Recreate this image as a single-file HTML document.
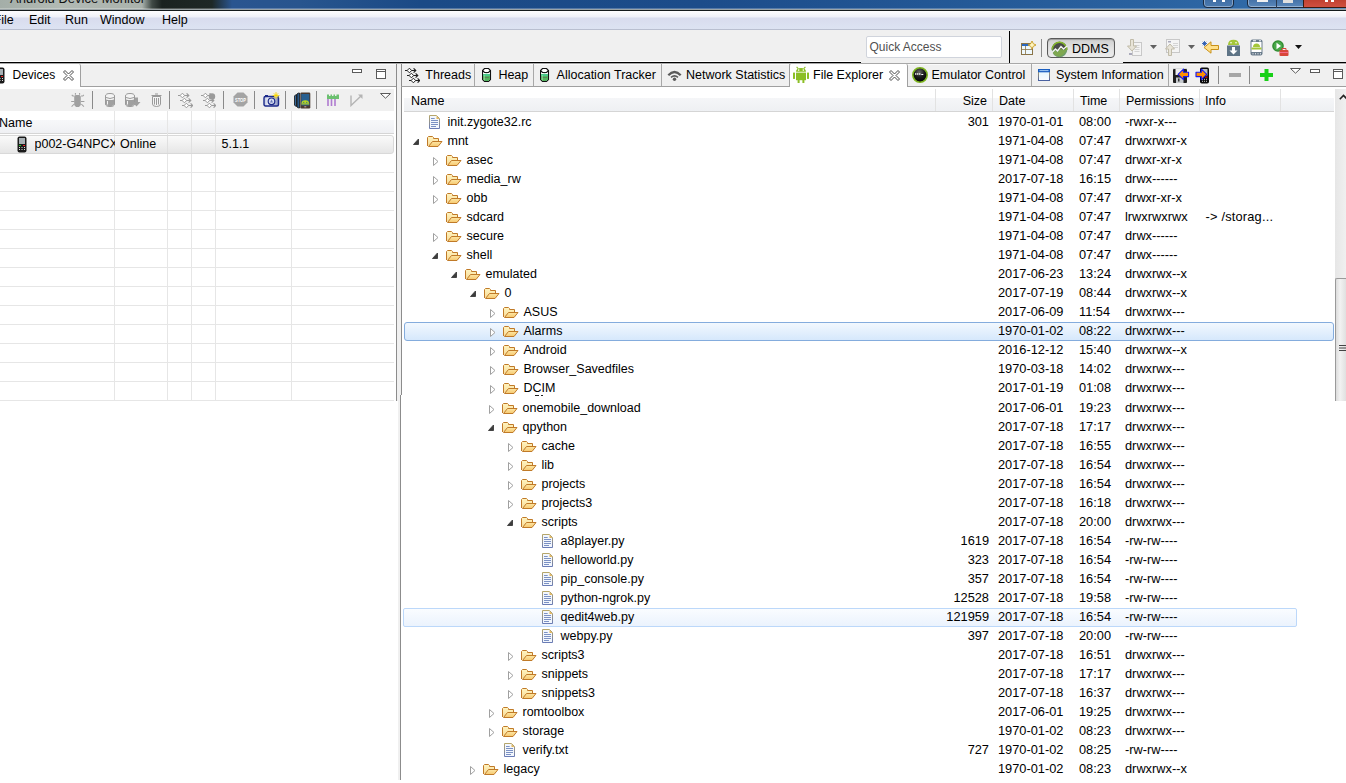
<!DOCTYPE html>
<html><head><meta charset="utf-8"><style>
*{margin:0;padding:0;box-sizing:border-box}
html,body{width:1346px;height:783px;overflow:hidden;background:#fff;font-family:"Liberation Sans",sans-serif;font-size:12.5px;color:#000;position:relative}
.abs{position:absolute}
.ic{display:block}
.t{position:absolute;height:19px;line-height:19px;white-space:nowrap}
.tx{position:absolute;white-space:nowrap;line-height:15px;height:15px}
.r{text-align:right}
.d{font-size:12.8px;margin-top:-1px}
#title{position:absolute;left:0;top:0;width:1346px;height:9px;background:linear-gradient(90deg,#a4aea8 0,#b2bab4 60px,#aab2ac 142px,#404a46 152px,#1a2220 162px,#1e2826 212px,#2a5590 232px,#28558e 300px,#1b4a86 420px,#1c4c8a 700px,#2a62a0 1150px,#3470ad 1346px)}
#titletxt{position:absolute;left:10px;top:-8px;font-size:13px;line-height:13px;color:#111;white-space:nowrap}
.mi{position:absolute;top:11px;height:18px;line-height:18px;font-size:12.5px}
.sel{position:absolute;left:404px;width:930px;height:19px;border:1px solid #84acdd;border-radius:3px;background:linear-gradient(#f2f8fe,#d6e8fc)}
.hov{position:absolute;left:403px;width:894px;height:19px;border:1px solid #bcd8fa;border-radius:2px;background:linear-gradient(#fafcff,#ebf3fd)}
.hd{position:absolute;height:15px;line-height:15px;white-space:nowrap}
</style></head><body>
<svg width="0" height="0" style="position:absolute"><defs><linearGradient id="fb" x1="0" y1="0" x2="0" y2="1"><stop offset="0" stop-color="#fff4c0"/><stop offset="1" stop-color="#f8dc98"/></linearGradient><linearGradient id="ff" x1="0" y1="0" x2="0" y2="1"><stop offset="0" stop-color="#fde7a6"/><stop offset="1" stop-color="#f6c86e"/></linearGradient><linearGradient id="fs" x1="0" y1="0" x2="0" y2="1"><stop offset="0" stop-color="#b6a66a"/><stop offset="1" stop-color="#6a7cb6"/></linearGradient></defs></svg>
<div id="title"><div id="titletxt">Android Device Monitor</div></div>
<div class="abs" style="left:1203px;top:-4px;width:31px;height:12px;background:linear-gradient(#3d6aa0,#4a7ab0);border:1px solid #1a2a40;border-radius:0 0 4px 4px;box-shadow:inset 0 0 0 1px rgba(255,255,255,0.35)"></div>
<div class="abs" style="left:1213px;top:0px;width:3px;height:2px;background:#fff"></div>
<div class="abs" style="left:1222px;top:0px;width:3px;height:2px;background:#fff"></div>
<div class="abs" style="left:1247px;top:-4px;width:99px;height:12px;background:linear-gradient(#3d6aa0,#5a88bb);border:1px solid #1a2a40;border-radius:0 0 0 4px;box-shadow:inset 0 0 0 1px rgba(255,255,255,0.35)"></div>
<div class="abs" style="left:1276px;top:-1px;width:1px;height:9px;background:#2a3a50"></div>
<div class="abs" style="left:1303px;top:-4px;width:43px;height:12px;background:linear-gradient(#b83a2a,#d05040);border-left:1px solid #3a1a10;border-bottom:1px solid #3a1a10"></div>
<div class="abs" style="left:1257px;top:0px;width:11px;height:2px;background:#f0f0f0"></div>
<div class="abs" style="left:1283px;top:0px;width:10px;height:3px;background:#e0e0e0"></div>
<div class="abs" style="left:1325px;top:0px;width:3px;height:2px;background:#fff"></div>
<div class="abs" style="left:1331px;top:0px;width:3px;height:2px;background:#fff"></div>
<div class="abs" style="left:0px;top:8px;width:1346px;height:1px;background:rgba(255,255,255,0.25)"></div><div class="abs" style="left:0px;top:9px;width:1346px;height:1px;background:#9aa3a6"></div>
<div class="abs" style="left:0px;top:10px;width:1346px;height:1px;background:#141a1c"></div>
<div class="abs" style="left:0px;top:11px;width:1346px;height:18px;background:linear-gradient(#fdfdfe 0,#eef0f8 6px,#d8dcee 7px,#dde3f2 100%)"></div>
<div class="abs" style="left:0px;top:29px;width:1346px;height:1px;background:#b9bfd0"></div>
<div class="mi" style="left:-6.5px">File</div>
<div class="mi" style="left:29px">Edit</div>
<div class="mi" style="left:65px">Run</div>
<div class="mi" style="left:100px">Window</div>
<div class="mi" style="left:162px">Help</div>
<div class="abs" style="left:0px;top:30px;width:1346px;height:33px;background:#f0f0f0"></div>
<div class="abs" style="left:0px;top:62px;width:861px;height:1px;background:#000"></div>
<div class="abs" style="left:0px;top:61px;width:861px;height:1px;background:#fff"></div>
<div class="abs" style="left:0px;top:63px;width:1346px;height:1px;background:#a8a8a8"></div>
<div class="abs" style="left:1123px;top:62px;width:223px;height:1px;background:#000"></div>
<div class="abs" style="left:1009px;top:31px;width:1px;height:32px;background:#000"></div>
<div class="abs" style="left:866px;top:36px;width:136px;height:22px;background:#fff;border:1px solid #d0d4dc;border-radius:2px"></div>
<div class="tx" style="left:869.5px;top:39.5px;color:#505050;font-size:12px">Quick Access</div>
<svg class="abs" style="left:1021px;top:41px" width="16" height="15" viewBox="0 0 16 15"><rect x="0.5" y="2.5" width="11" height="11" fill="#eef8fd" stroke="#8a7448"/><rect x="1" y="3" width="10" height="2" fill="#2a68c0"/><path d="M4.5 5V13.5M1 8.5H11" stroke="#8a7448" stroke-width="0.8"/><path d="M11 0L12.3 2.7L15 4L12.3 5.3L11 8L9.7 5.3L7 4L9.7 2.7Z" fill="#fff6c0" stroke="#c89a20" stroke-width="0.9"/></svg>
<div class="abs" style="left:1041px;top:39px;width:1px;height:18px;background:#8a8a8a"></div>
<div class="abs" style="left:1047px;top:38px;width:68px;height:20px;background:linear-gradient(#cfcfcf,#e2e2e2 50%,#ececec);border:1px solid #5a5a5a;border-radius:4px;box-shadow:inset 0 1px 1px rgba(0,0,0,0.25)"></div>
<svg class="abs" style="left:1050.5px;top:40.5px" width="17" height="17" viewBox="0 0 17 17"><circle cx="8.5" cy="8.5" r="7.8" fill="#6e9c6a"/><path d="M0.7 8.5A7.8 7.8 0 0 1 16.3 8.5Z" fill="#4a4a4a"/><circle cx="8.5" cy="8.5" r="7.2" fill="none" stroke="#86b82a" stroke-width="1.4" stroke-dasharray="23 100" transform="rotate(180 8.5 8.5)"/><path d="M1 11.5L4.5 8L6.5 10L10 5.5L12.5 8L16 5" fill="none" stroke="#f4f4f4" stroke-width="1.3"/><path d="M2 12L4.5 9.5L6.5 11.5L10 7L12.5 9.5L15.5 7V9Q13 14 8.5 15.5Q4 15 2 12Z" fill="#8ab040" opacity="0.6"/></svg>
<div class="tx" style="left:1072px;top:41.5px;">DDMS</div>
<svg class="abs" style="left:1127px;top:39px" width="15" height="17" viewBox="0 0 15 17"><rect x="5.5" y="3.5" width="9" height="13" fill="#f4f4f4" stroke="#c8c8c8"/><path d="M7.5 6.5h5M7.5 8.5h5M7.5 10.5h5M7.5 12.5h5" stroke="#d4d4d4"/><rect x="2" y="14" width="3" height="2" fill="#aab"/><path d="M3.5 0.5H6.5V7H9.5L5 12L0.5 7H3.5Z" fill="#e8e4d8" stroke="#c0bba8"/></svg>
<svg class="abs" style="left:1150px;top:45px" width="7" height="4" viewBox="0 0 7 4"><path d="M0 0H7L3.5 4Z" fill="#606060"/></svg>
<svg class="abs" style="left:1165px;top:39px" width="15" height="17" viewBox="0 0 15 17"><rect x="1.5" y="0.5" width="13" height="13" fill="#f4f4f4" stroke="#c8c8c8"/><rect x="3" y="2" width="3" height="1.5" fill="#aab"/><path d="M8 4.5h5M8 6.5h5M8 8.5h5" stroke="#d4d4d4"/><path d="M3.5 16.5H6.5V10H9.5L5 5L0.5 10H3.5Z" fill="#e8e4d8" stroke="#c0bba8"/></svg>
<svg class="abs" style="left:1188px;top:45px" width="7" height="4" viewBox="0 0 7 4"><path d="M0 0H7L3.5 4Z" fill="#606060"/></svg>
<svg class="abs" style="left:1202px;top:41px" width="17" height="13" viewBox="0 0 17 13"><path d="M16.5 4.5H9V0.8L2 6.5L9 12.2V8.5H16.5Z" fill="#ffe08a" stroke="#c8901a"/><path d="M2.5 0V5M0 2.5H5M0.8 0.8L4.2 4.2M4.2 0.8L0.8 4.2" stroke="#2a5ab0" stroke-width="0.9"/></svg>
<svg class="abs" style="left:1227px;top:39px" width="13" height="17" viewBox="0 0 13 17"><path d="M1 6Q1 0.8 6.5 0.8Q12 0.8 12 6Z" fill="#a4c639"/><circle cx="4" cy="3.8" r="0.8" fill="#fff"/><circle cx="9" cy="3.8" r="0.8" fill="#fff"/><rect x="0" y="6.5" width="13" height="10.5" fill="#5e7486"/><path d="M5 8H8V11.5H10.5L6.5 15.5L2.5 11.5H5Z" fill="#fff"/></svg>
<svg class="abs" style="left:1250px;top:39px" width="13" height="17" viewBox="0 0 13 17"><rect x="0.5" y="0.5" width="12" height="16" rx="2" fill="#6a7c8c"/><rect x="1.5" y="3" width="10" height="10" fill="#fff"/><path d="M3 8Q3 4.5 6.5 4.5Q10 4.5 10 8Z" fill="#a4c639"/><rect x="1.5" y="8.5" width="10" height="2" fill="#a4c639"/><path d="M3 1.8h3M9 1.8h2" stroke="#fff"/><path d="M2.5 14.8h1M5 14.8h1M7.5 14.8h1M10 14.8h1" stroke="#fff"/></svg>
<svg class="abs" style="left:1272px;top:40px" width="17" height="16" viewBox="0 0 17 16"><circle cx="6" cy="6" r="5.8" fill="#2e8a2e"/><circle cx="6" cy="6" r="4.5" fill="#4aa84a"/><path d="M4.5 2.8V9.2L9 6Z" fill="#fff"/><rect x="7.5" y="10" width="9" height="6" rx="1" fill="#d8463a"/><path d="M10 10V8.5H14V10" fill="none" stroke="#d8463a"/><path d="M8 12.5H16" stroke="#f7a" stroke-width="0.7"/></svg>
<svg class="abs" style="left:1295px;top:45px" width="7" height="4" viewBox="0 0 7 4"><path d="M0 0H7L3.5 4Z" fill="#111"/></svg>
<div class="abs" style="left:0px;top:64px;width:397px;height:337px;background:#fff"></div>
<div class="abs" style="left:0px;top:64px;width:396px;height:22px;background:#f0f0f0"></div>
<div class="abs" style="left:0px;top:64px;width:81px;height:23px;background:#fff;border-right:1px solid #a0a0a0;border-top-right-radius:2px"></div>
<div class="abs" style="left:81px;top:64px;width:315px;height:1px;background:#fafafa"></div>
<svg class="abs" style="left:-5px;top:67px" width="10" height="17" viewBox="0 0 10 17"><rect x="0.5" y="0.5" width="9" height="16" rx="2" fill="#1a1a1a"/><rect x="2" y="2" width="6" height="6" fill="#a8b0b4"/><rect x="2" y="9" width="2" height="1" fill="#2c2"/><rect x="6" y="9" width="2" height="1" fill="#e22"/><path d="M2 11.5h1M4.5 11.5h1M7 11.5h1M2 13.5h1M4.5 13.5h1M7 13.5h1" stroke="#ddd"/></svg>
<div class="tx" style="left:12.5px;top:68px;font-size:12px">Devices</div>
<svg class="abs" style="left:62.5px;top:69.5px" width="11" height="11" viewBox="0 0 11 11"><path d="M0.5 2L2 0.5L5.5 4L9 0.5L10.5 2L7 5.5L10.5 9L9 10.5L5.5 7L2 10.5L0.5 9L4 5.5Z" fill="#fff" stroke="#4a4a4a" stroke-width="1" stroke-linejoin="round"/></svg>
<div class="abs" style="left:80px;top:86px;width:316px;height:1px;background:#a0a0a0"></div>
<svg class="abs" style="left:352px;top:69px" width="10" height="4" viewBox="0 0 10 4"><rect x="0.5" y="0.5" width="9" height="3" fill="#fff" stroke="#5a5a5a"/></svg>
<svg class="abs" style="left:376px;top:69px" width="10" height="10" viewBox="0 0 10 10"><rect x="0.5" y="0.5" width="9" height="9" fill="#fff" stroke="#5a5a5a"/><path d="M1 2.5H9" stroke="#5a5a5a"/></svg>
<div class="abs" style="left:396px;top:64px;width:1px;height:337px;background:#8c8c8c"></div>
<div class="abs" style="left:0px;top:89px;width:394px;height:22px;background:#f0f0f0"></div>
<svg class="abs" style="left:71px;top:93px" width="14" height="15" viewBox="0 0 14 15"><path d="M4.5 2H8.5L9.8 3.5V12L8 14H5L3.2 12V3.5Z" fill="#a0a0a0"/><path d="M4.4 0V1.8M8.6 0V1.8M0.8 1.8L1.8 3H3.5M12.8 1.8L11.8 3H10M0.2 8.5H3.5M10 8.5H13.4M0.6 13.6L3.2 11M12.9 13.6L10.3 11" fill="none" stroke="#a0a0a0" stroke-width="1.05"/></svg>
<div class="abs" style="left:92px;top:91px;width:1px;height:18px;background:#8a8a8a"></div>
<svg class="abs" style="left:105px;top:93px" width="10" height="14" viewBox="0 0 10 14"><path d="M0.5 3Q0.5 0.5 5 0.5Q9.5 0.5 9.5 3V11Q9.5 13.5 5 13.5Q0.5 13.5 0.5 11Z" fill="#f4f4f4" stroke="#9a9a9a"/><path d="M1 6.5Q5 7.5 9 6.5V11Q9 13 5 13Q1 13 1 11Z" fill="#a0a0a0"/><path d="M1 4.5Q5 6.5 9 4.5" fill="none" stroke="#9a9a9a"/><path d="M2.5 8V11.5" stroke="#f4f4f4"/></svg>
<svg class="abs" style="left:125px;top:93px" width="16" height="14" viewBox="0 0 16 14"><path d="M0.5 3Q0.5 0.5 5 0.5Q9.5 0.5 9.5 3V11Q9.5 13.5 5 13.5Q0.5 13.5 0.5 11Z" fill="#f4f4f4" stroke="#9a9a9a"/><path d="M1 6.5Q5 7.5 9 6.5V11Q9 13 5 13Q1 13 1 11Z" fill="#a0a0a0"/><path d="M1 4.5Q5 6.5 9 4.5" fill="none" stroke="#9a9a9a"/><path d="M2.5 8V11.5" stroke="#f4f4f4"/><path d="M10 4.5H13V9H15.5L11.5 13.5L7.5 9H10Z" fill="#a0a0a0"/></svg>
<svg class="abs" style="left:151px;top:93px" width="11" height="14" viewBox="0 0 11 14"><path d="M1.5 3.5H9.5V11Q9.5 13.5 5.5 13.5Q1.5 13.5 1.5 11Z" fill="#f4f4f4" stroke="#9a9a9a"/><path d="M0.5 2.5H10.5M4 1H7" stroke="#9a9a9a" stroke-width="1.2"/><path d="M3.5 5V11.5M5.5 5V12M7.5 5V11.5" stroke="#9a9a9a"/></svg>
<div class="abs" style="left:169px;top:91px;width:1px;height:18px;background:#8a8a8a"></div>
<svg class="abs" style="left:178px;top:93px" width="15" height="15" viewBox="0 0 15 15"><path d="M0 2.5H11M8.6 0.2999999999999998L10.8 2.5L8.6 4.7" fill="none" stroke="#9a9a9a" stroke-width="1.1"/><path d="M4.4 0.20000000000000018L6.7 2.5L4.4 4.8L2.1 2.5Z" fill="#fff" stroke="#9a9a9a" stroke-width="1"/><path d="M2 7.5H13M10.6 5.3L12.8 7.5L10.6 9.7" fill="none" stroke="#9a9a9a" stroke-width="1.1"/><path d="M6.4 5.2L8.7 7.5L6.4 9.8L4.1 7.5Z" fill="#fff" stroke="#9a9a9a" stroke-width="1"/><path d="M4 12.5H15M12.6 10.3L14.8 12.5L12.6 14.7" fill="none" stroke="#9a9a9a" stroke-width="1.1"/><path d="M8.4 10.2L10.7 12.5L8.4 14.8L6.1 12.5Z" fill="#fff" stroke="#9a9a9a" stroke-width="1"/></svg>
<svg class="abs" style="left:201px;top:93px" width="15" height="15" viewBox="0 0 15 15"><path d="M0 2.5H11M8.6 0.2999999999999998L10.8 2.5L8.6 4.7" fill="none" stroke="#9a9a9a" stroke-width="1.1"/><path d="M4.4 0.20000000000000018L6.7 2.5L4.4 4.8L2.1 2.5Z" fill="#fff" stroke="#9a9a9a" stroke-width="1"/><path d="M2 7.5H13M10.6 5.3L12.8 7.5L10.6 9.7" fill="none" stroke="#9a9a9a" stroke-width="1.1"/><path d="M6.4 5.2L8.7 7.5L6.4 9.8L4.1 7.5Z" fill="#fff" stroke="#9a9a9a" stroke-width="1"/><path d="M4 12.5H15M12.6 10.3L14.8 12.5L12.6 14.7" fill="none" stroke="#9a9a9a" stroke-width="1.1"/><path d="M8.4 10.2L10.7 12.5L8.4 14.8L6.1 12.5Z" fill="#fff" stroke="#9a9a9a" stroke-width="1"/><circle cx="11" cy="3.5" r="3.2" fill="#9a9a9a"/></svg>
<div class="abs" style="left:223px;top:91px;width:1px;height:18px;background:#8a8a8a"></div>
<svg class="abs" style="left:233px;top:92px" width="15" height="15" viewBox="0 0 15 15"><path d="M4.5 0.5H10.5L14.5 4.5V10.5L10.5 14.5H4.5L0.5 10.5V4.5Z" fill="#a4a4a4"/><text x="2" y="9.5" font-size="5.4" font-family="Liberation Sans" font-weight="bold" fill="#fff" textLength="11" lengthAdjust="spacingAndGlyphs">STOP</text></svg>
<div class="abs" style="left:254px;top:91px;width:1px;height:18px;background:#8a8a8a"></div>
<svg class="abs" style="left:263px;top:92px" width="17" height="15" viewBox="0 0 17 15"><defs><linearGradient id="cg" x1="0" y1="0" x2="1" y2="0"><stop offset="0" stop-color="#b8c0dc"/><stop offset="0.3" stop-color="#f0f2fa"/><stop offset="1" stop-color="#8a94c0"/></linearGradient></defs><rect x="1" y="4.5" width="14.5" height="9.5" rx="1.5" fill="url(#cg)" stroke="#1c2a8a" stroke-width="1.4"/><rect x="2" y="3" width="3" height="2" fill="#1c2a8a"/><circle cx="8.5" cy="9.3" r="3.3" fill="#d8def0" stroke="#1c2a8a" stroke-width="1.2"/><path d="M7 10.5L8.5 7.5L10 10.5Z" fill="#6a7ab8"/><circle cx="13" cy="3.5" r="2" fill="#fff7a0"/><path d="M13 0V7M9.5 3.5H16.5M10.8 1.3L15.2 5.7M15.2 1.3L10.8 5.7" stroke="#f4d000" stroke-width="0.8"/></svg>
<div class="abs" style="left:285px;top:91px;width:1px;height:18px;background:#8a8a8a"></div>
<svg class="abs" style="left:294px;top:92px" width="17" height="17" viewBox="0 0 17 17"><path d="M0.5 4Q1.5 2.5 2.5 2.5V14.5Q1.5 14.5 0.5 13Z" fill="#3a6a9a" stroke="#111" stroke-width="0.8"/><path d="M3 2Q4 0.8 5.5 1V16Q4 16 3 15Z" fill="#2a5a8a" stroke="#111" stroke-width="0.8"/><rect x="6.3" y="0.5" width="10" height="16" rx="1.2" fill="#4a3a30"/><rect x="7.3" y="2" width="8" height="11.5" fill="#2a6090"/><path d="M7.5 11.5Q7.5 8.3 11.3 8.3Q15 8.3 15 11.5Z" fill="#b8d820"/><rect x="7.3" y="11.5" width="8" height="1" fill="#b8d820"/><circle cx="9.8" cy="10.3" r="0.6" fill="#2a6090"/><circle cx="12.8" cy="10.3" r="0.6" fill="#2a6090"/><rect x="10.3" y="14.3" width="2" height="1" fill="#caa"/></svg>
<div class="abs" style="left:316px;top:91px;width:1px;height:18px;background:#8a8a8a"></div>
<svg class="abs" style="left:327px;top:94px" width="13" height="13" viewBox="0 0 13 13"><path d="M1 5V12M4.5 5V12M8 5V12" stroke="#b07cd0" stroke-width="1.6"/><path d="M0 0.5H2V2H3.5V0.5H5V2H6.5V0.5H8V2H9.5V0.5H12V5H0Z" fill="#6cc070"/></svg>
<svg class="abs" style="left:350px;top:94px" width="13" height="13" viewBox="0 0 13 13"><path d="M1 1.5V11.5L11 2" fill="none" stroke="#b4b4b4" stroke-width="1.4"/><path d="M8 0.5H12.5V5Z" fill="#b4b4b4"/></svg>
<svg class="abs" style="left:380px;top:93px" width="11" height="6" viewBox="0 0 11 6"><path d="M0.5 0.5H10.5L5.5 5.2Z" fill="#fff" stroke="#5a5a5a" stroke-linejoin="round"/></svg>
<div class="abs" style="left:0px;top:120px;width:394px;height:13px;background:linear-gradient(#f7f8fa,#eff0f3)"></div>
<div class="abs" style="left:0px;top:133px;width:394px;height:1px;background:#d5d5d5"></div>
<div class="abs" style="left:114px;top:111px;width:1px;height:290px;background:#e6e6e6"></div>
<div class="abs" style="left:167px;top:111px;width:1px;height:290px;background:#e6e6e6"></div>
<div class="abs" style="left:191px;top:111px;width:1px;height:290px;background:#e6e6e6"></div>
<div class="abs" style="left:215px;top:111px;width:1px;height:290px;background:#e6e6e6"></div>
<div class="abs" style="left:291px;top:111px;width:1px;height:290px;background:#e6e6e6"></div>
<div class="tx" style="left:-1px;top:116px;">Name</div>
<div class="abs" style="left:-4px;top:135px;width:398px;height:19px;background:linear-gradient(#fafafa,#e6e6e6);border:1px solid #d9d9d9;border-radius:3px"></div>
<div class="abs" style="left:114px;top:136px;width:1px;height:17px;background:#e0e0e0"></div>
<div class="abs" style="left:167px;top:136px;width:1px;height:17px;background:#e0e0e0"></div>
<div class="abs" style="left:191px;top:136px;width:1px;height:17px;background:#e0e0e0"></div>
<div class="abs" style="left:215px;top:136px;width:1px;height:17px;background:#e0e0e0"></div>
<div class="abs" style="left:291px;top:136px;width:1px;height:17px;background:#e0e0e0"></div>
<svg class="abs" style="left:17px;top:136px" width="10" height="17" viewBox="0 0 10 17"><rect x="0.5" y="0.5" width="9" height="16" rx="2" fill="#1a1a1a"/><rect x="2" y="2" width="6" height="6" fill="#a8b0b4"/><rect x="2" y="9" width="2" height="1" fill="#2c2"/><rect x="6" y="9" width="2" height="1" fill="#e22"/><path d="M2 11.5h1M4.5 11.5h1M7 11.5h1M2 13.5h1M4.5 13.5h1M7 13.5h1" stroke="#ddd"/></svg>
<div class="tx" style="left:34.5px;top:137px;width:80px;overflow:hidden">p002-G4NPCX</div>
<div class="tx" style="left:120px;top:137px;">Online</div>
<div class="tx" style="left:221.5px;top:137px;">5.1.1</div>
<div class="abs" style="left:0px;top:172px;width:394px;height:1px;background:#e6e6e6"></div>
<div class="abs" style="left:0px;top:191px;width:394px;height:1px;background:#e6e6e6"></div>
<div class="abs" style="left:0px;top:210px;width:394px;height:1px;background:#e6e6e6"></div>
<div class="abs" style="left:0px;top:229px;width:394px;height:1px;background:#e6e6e6"></div>
<div class="abs" style="left:0px;top:248px;width:394px;height:1px;background:#e6e6e6"></div>
<div class="abs" style="left:0px;top:267px;width:394px;height:1px;background:#e6e6e6"></div>
<div class="abs" style="left:0px;top:286px;width:394px;height:1px;background:#e6e6e6"></div>
<div class="abs" style="left:0px;top:305px;width:394px;height:1px;background:#e6e6e6"></div>
<div class="abs" style="left:0px;top:324px;width:394px;height:1px;background:#e6e6e6"></div>
<div class="abs" style="left:0px;top:343px;width:394px;height:1px;background:#e6e6e6"></div>
<div class="abs" style="left:0px;top:362px;width:394px;height:1px;background:#e6e6e6"></div>
<div class="abs" style="left:0px;top:381px;width:394px;height:1px;background:#e6e6e6"></div>
<div class="abs" style="left:0px;top:400px;width:394px;height:1px;background:#e6e6e6"></div>
<div class="abs" style="left:397px;top:64px;width:4px;height:337px;background:#f0f0f0"></div>
<div class="abs" style="left:401px;top:64px;width:945px;height:22px;background:#f0f0f0"></div>
<div class="abs" style="left:402px;top:64px;width:387px;height:1px;background:#fafafa"></div>
<div class="abs" style="left:908px;top:64px;width:438px;height:1px;background:#fafafa"></div>
<div class="abs" style="left:401px;top:64px;width:1px;height:331px;background:#8c8c8c"></div>
<div class="abs" style="left:400px;top:395px;width:1px;height:385px;background:#8c8c8c"></div>
<div class="abs" style="left:398px;top:401px;width:2px;height:379px;background:#f0f0f0"></div>
<div class="abs" style="left:535px;top:395px;width:4px;height:1px;background:#222"></div>
<div class="abs" style="left:541px;top:395px;width:2px;height:1px;background:#222"></div>
<div class="abs" style="left:401px;top:86px;width:945px;height:1px;background:#a0a0a0"></div>
<div class="abs" style="left:474px;top:64px;width:1px;height:22px;background:#a8a8a8"></div>
<div class="tx" style="left:425.3px;top:68px;">Threads</div>
<div class="abs" style="left:533px;top:64px;width:1px;height:22px;background:#a8a8a8"></div>
<div class="tx" style="left:498.4px;top:68px;">Heap</div>
<div class="abs" style="left:661px;top:64px;width:1px;height:22px;background:#a8a8a8"></div>
<div class="tx" style="left:556.6px;top:68px;">Allocation Tracker</div>
<div class="abs" style="left:789px;top:64px;width:1px;height:22px;background:#a8a8a8"></div>
<div class="tx" style="left:686px;top:68px;">Network Statistics</div>
<div class="abs" style="left:789px;top:64px;width:119px;height:23px;background:#fff;border-left:1px solid #a0a0a0;border-right:1px solid #a0a0a0;border-top-left-radius:2px;border-top-right-radius:2px"></div>
<div class="tx" style="left:813px;top:68px;">File Explorer</div>
<div class="abs" style="left:1031px;top:64px;width:1px;height:22px;background:#a8a8a8"></div>
<div class="tx" style="left:931.5px;top:68px;">Emulator Control</div>
<div class="abs" style="left:1168px;top:64px;width:1px;height:22px;background:#a8a8a8"></div>
<div class="tx" style="left:1056px;top:68px;">System Information</div>
<svg class="abs" style="left:405px;top:68px" width="15" height="15" viewBox="0 0 15 15"><path d="M0 2.5H11M8.6 0.2999999999999998L10.8 2.5L8.6 4.7" fill="none" stroke="#222" stroke-width="1.1"/><path d="M4.4 0.20000000000000018L6.7 2.5L4.4 4.8L2.1 2.5Z" fill="#fff" stroke="#222" stroke-width="1"/><path d="M2 7.5H13M10.6 5.3L12.8 7.5L10.6 9.7" fill="none" stroke="#222" stroke-width="1.1"/><path d="M6.4 5.2L8.7 7.5L6.4 9.8L4.1 7.5Z" fill="#fff" stroke="#222" stroke-width="1"/><path d="M4 12.5H15M12.6 10.3L14.8 12.5L12.6 14.7" fill="none" stroke="#222" stroke-width="1.1"/><path d="M8.4 10.2L10.7 12.5L8.4 14.8L6.1 12.5Z" fill="#fff" stroke="#222" stroke-width="1"/></svg>
<svg class="abs" style="left:482px;top:68px" width="10" height="15" viewBox="0 0 10 15"><path d="M2.5 0.5H6.5L8.5 2.5V11.5L6.5 13.5H2.5L0.5 11.5V2.5Z" fill="#fff" stroke="#111" stroke-width="1.1"/><path d="M1 6.3Q4.5 5.3 8 6.3V11.3L6.3 13H2.7L1 11.3Z" fill="#52b45e"/><path d="M1 6.3Q4.5 5.3 8 6.3V8H1Z" fill="#48c88a"/><path d="M2 9.5H7" stroke="#5a7a5a" stroke-width="0.8"/><path d="M0.5 2.5L2.5 4.5H6.5L8.5 2.5" fill="none" stroke="#111" stroke-width="1.1"/><path d="M2.3 7V12" stroke="#a8e0b0" stroke-width="0.7"/></svg>
<svg class="abs" style="left:540px;top:68px" width="10" height="15" viewBox="0 0 10 15"><path d="M2.5 0.5H6.5L8.5 2.5V11.5L6.5 13.5H2.5L0.5 11.5V2.5Z" fill="#fff" stroke="#111" stroke-width="1.1"/><path d="M1 6.3Q4.5 5.3 8 6.3V11.3L6.3 13H2.7L1 11.3Z" fill="#52b45e"/><path d="M1 6.3Q4.5 5.3 8 6.3V8H1Z" fill="#48c88a"/><path d="M2 9.5H7" stroke="#5a7a5a" stroke-width="0.8"/><path d="M0.5 2.5L2.5 4.5H6.5L8.5 2.5" fill="none" stroke="#111" stroke-width="1.1"/><path d="M2.3 7V12" stroke="#a8e0b0" stroke-width="0.7"/></svg>
<svg class="abs" style="left:667px;top:70px" width="15" height="11" viewBox="0 0 15 11"><path d="M1.3 5.2Q7.5 -1.2 13.7 5.2" fill="none" stroke="#5a5a5a" stroke-width="2.3"/><path d="M4 7.4Q7.5 4.4 11 7.4" fill="none" stroke="#5a5a5a" stroke-width="1.5"/><circle cx="7.5" cy="9.2" r="1.7" fill="#5a5a5a"/></svg>
<svg class="abs" style="left:793px;top:66px" width="16" height="17" viewBox="0 0 16 17"><path d="M3 5.8Q3 2 8 2Q13 2 13 5.8Z" fill="#8cbf26"/><path d="M3.6 0.8L5.2 2.6M12.4 0.8L10.8 2.6" stroke="#8cbf26" stroke-width="1.1"/><circle cx="5.7" cy="4.1" r="0.8" fill="#fff"/><circle cx="10.3" cy="4.1" r="0.8" fill="#fff"/><rect x="3" y="6.6" width="10" height="7.6" fill="#8cbf26"/><rect x="0" y="6.6" width="2" height="6.3" fill="#8cbf26"/><rect x="14" y="6.6" width="2" height="6.3" fill="#8cbf26"/><rect x="4.6" y="13" width="2" height="4" fill="#8cbf26"/><rect x="9.4" y="13" width="2" height="4" fill="#8cbf26"/></svg>
<svg class="abs" style="left:888.5px;top:69.5px" width="11" height="11" viewBox="0 0 11 11"><path d="M0.5 2L2 0.5L5.5 4L9 0.5L10.5 2L7 5.5L10.5 9L9 10.5L5.5 7L2 10.5L0.5 9L4 5.5Z" fill="#fff" stroke="#4a4a4a" stroke-width="1" stroke-linejoin="round"/></svg>
<svg class="abs" style="left:912px;top:67px" width="16" height="16" viewBox="0 0 16 16"><defs><radialGradient id="eg" cx="0.45" cy="0.3" r="0.7"><stop offset="0" stop-color="#6a6a6a"/><stop offset="0.5" stop-color="#1a1a1a"/><stop offset="1" stop-color="#000"/></radialGradient></defs><circle cx="8" cy="8" r="7.2" fill="url(#eg)" stroke="#7cb41e" stroke-width="1.6"/><path d="M3.8 6V8M5.8 6V8M7.8 6V8M9.3 7.5H11.3" stroke="#fff" stroke-width="1"/></svg>
<svg class="abs" style="left:1038px;top:69px" width="12" height="12" viewBox="0 0 12 12"><defs><linearGradient id="ss" x1="0" y1="0" x2="0" y2="1"><stop offset="0" stop-color="#c0a860"/><stop offset="1" stop-color="#4a62a0"/></linearGradient><linearGradient id="sgi" x1="0" y1="0" x2="0" y2="1"><stop offset="0" stop-color="#dff6ff"/><stop offset="1" stop-color="#fafdff"/></linearGradient></defs><rect x="0.5" y="0.5" width="11" height="11" fill="url(#sgi)" stroke="url(#ss)"/><rect x="0" y="0" width="12" height="3.3" fill="#1a5ec0"/><path d="M1.5 1.6H10.5" stroke="#b0d8fa" stroke-width="0.9"/></svg>
<svg class="abs" style="left:1172px;top:67px" width="18" height="17" viewBox="0 0 18 17"><rect x="1" y="1" width="14" height="15" fill="#d8dadc"/><rect x="1" y="2" width="14" height="14" rx="1" fill="#202020"/><rect x="3.5" y="2" width="8" height="6" fill="#f0f0f0"/><rect x="4" y="10.5" width="7.5" height="5.5" fill="#c4c8cc"/><rect x="6" y="11.5" width="1.5" height="3" fill="#333"/><path d="M6.1 7.4L11.5 2.2V5.2H16.6V9.6H11.5V12.6Z" fill="#ff9000" stroke="#1818f0" stroke-width="1.1" stroke-linejoin="round"/></svg>
<svg class="abs" style="left:1195px;top:67px" width="15" height="17" viewBox="0 0 15 17"><rect x="5" y="0.5" width="9" height="16" rx="1.8" fill="#0a0a0a"/><rect x="6.5" y="2" width="6" height="6.5" fill="#b8c0c4"/><rect x="10" y="9.5" width="2.5" height="1.2" fill="#e01010"/><path d="M7 12.3h1M9 12.3h1M11 12.3h1M7 14.3h1M9 14.3h1M11 14.3h1" stroke="#ccc"/><path d="M1 5.2H6.4V2.2L11.7 7.4L6.4 12.6V9.6H1Z" fill="#ff9000" stroke="#1818f0" stroke-width="1.1" stroke-linejoin="round"/></svg>
<div class="abs" style="left:1218px;top:66px;width:1px;height:18px;background:#8a8a8a"></div>
<svg class="abs" style="left:1229px;top:73px" width="12" height="4" viewBox="0 0 12 4"><rect x="0" y="0" width="12" height="4" fill="#a6a6a6"/></svg>
<div class="abs" style="left:1249px;top:66px;width:1px;height:18px;background:#8a8a8a"></div>
<svg class="abs" style="left:1260px;top:69px" width="13" height="12" viewBox="0 0 13 12"><path d="M4.5 0H8.5V4H13V8H8.5V12H4.5V8H0V4H4.5Z" fill="#18d018"/></svg>
<svg class="abs" style="left:1290px;top:68px" width="11" height="6" viewBox="0 0 11 6"><path d="M0.5 0.5H10.5L5.5 5.2Z" fill="#fff" stroke="#5a5a5a" stroke-linejoin="round"/></svg>
<svg class="abs" style="left:1310px;top:69px" width="10" height="4" viewBox="0 0 10 4"><rect x="0.5" y="0.5" width="9" height="3" fill="#fff" stroke="#5a5a5a"/></svg>
<svg class="abs" style="left:1333px;top:69px" width="10" height="10" viewBox="0 0 10 10"><rect x="0.5" y="0.5" width="9" height="9" fill="#fff" stroke="#5a5a5a"/><path d="M1 2.5H9" stroke="#5a5a5a"/></svg>
<div class="abs" style="left:404px;top:98px;width:930px;height:13px;background:linear-gradient(#f5f6f8,#eef0f3)"></div>
<div class="abs" style="left:404px;top:111px;width:930px;height:1px;background:#d5d5d5"></div>
<div class="abs" style="left:935px;top:89px;width:1px;height:22px;background:#e2e2e2"></div>
<div class="abs" style="left:992px;top:89px;width:1px;height:22px;background:#e2e2e2"></div>
<div class="abs" style="left:1073px;top:89px;width:1px;height:22px;background:#e2e2e2"></div>
<div class="abs" style="left:1119px;top:89px;width:1px;height:22px;background:#e2e2e2"></div>
<div class="abs" style="left:1199px;top:89px;width:1px;height:22px;background:#e2e2e2"></div>
<div class="abs" style="left:1280px;top:89px;width:1px;height:22px;background:#e2e2e2"></div>
<div class="tx" style="left:411px;top:93.5px;">Name</div>
<div class="tx" style="right:359px;top:93.5px">Size</div>
<div class="tx" style="left:999px;top:93.5px;">Date</div>
<div class="tx" style="left:1080px;top:93.5px;">Time</div>
<div class="tx" style="left:1126px;top:93.5px;">Permissions</div>
<div class="tx" style="left:1205px;top:93.5px;">Info</div>
<div class="abs" style="left:1334px;top:87px;width:12px;height:2px;background:#fff"></div>
<div class="abs" style="left:1335px;top:89px;width:11px;height:312px;background:linear-gradient(90deg,#e6e6e6,#f0f0f0)"></div>
<svg class="abs" style="left:1339px;top:94px" width="9" height="6" viewBox="0 0 9 6"><path d="M0.8 5.2L4.5 1.5L8.2 5.2" fill="none" stroke="#222" stroke-width="1.6"/></svg>
<div class="abs" style="left:1335px;top:278px;width:11px;height:123px;background:linear-gradient(90deg,#dcdcdc,#f2f2f2 40%,#e0e0e0);border-left:1px solid #9a9a9a;border-top:1px solid #9a9a9a;border-top-left-radius:2px"></div>
<svg class="abs" style="left:1339px;top:344px" width="7" height="9" viewBox="0 0 7 9"><path d="M0 1.5h7M0 4h7M0 6.5h7" stroke="#444"/></svg>
<div class="abs" style="left:429px;top:115px"><svg class="ic" width="12" height="15" viewBox="0 0 12 15"><path d="M0.5 0.5H7.5L10.5 3.5V13.5H0.5Z" fill="#f3f7fd" stroke="url(#fs)"/><path d="M7.5 1V4H10.5Z" fill="#e2b65a"/><path d="M2 3.5h3.7M2 5.5h7M2 7.5h7M2 9.5h7M2 11.5h5" stroke="#7b91c4"/></svg></div><div class="t" style="left:447.5px;top:113px">init.zygote32.rc</div><div class="t r d" style="right:357px;top:113px">301</div><div class="t d" style="left:998px;top:113px">1970-01-01</div><div class="t d" style="left:1079px;top:113px">08:00</div><div class="t d" style="left:1125px;top:113px">-rwxr-x---</div>
<div class="abs" style="left:413px;top:138px"><svg class="ic" width="7" height="8" viewBox="0 0 7 8"><path d="M5.5 1V6.5H0.5Z" fill="#3c3c3c" stroke="#444" stroke-linejoin="round"/></svg></div><div class="abs" style="left:427px;top:135px"><svg class="ic" width="16" height="12" viewBox="0 0 16 12"><path d="M0.5 11V2.5L1.5 1.5H5.5L6.5 2.5V3.5H11.5V6.5" fill="url(#fb)" stroke="#c07a28"/><path d="M5.5 6.5H15L11 11.5H1.5Z" fill="url(#ff)" stroke="#c07a28" stroke-linejoin="round"/></svg></div><div class="t" style="left:447.5px;top:132px">mnt</div><div class="t d" style="left:998px;top:132px">1971-04-08</div><div class="t d" style="left:1079px;top:132px">07:47</div><div class="t d" style="left:1125px;top:132px">drwxrwxr-x</div>
<div class="abs" style="left:433px;top:157px"><svg class="ic" width="6" height="10" viewBox="0 0 6 10"><path d="M0.5 0.5L5 4.5L0.5 8.5Z" fill="#fff" stroke="#a0a0a0"/></svg></div><div class="abs" style="left:446px;top:154px"><svg class="ic" width="16" height="12" viewBox="0 0 16 12"><path d="M0.5 11V2.5L1.5 1.5H5.5L6.5 2.5V3.5H11.5V6.5" fill="url(#fb)" stroke="#c07a28"/><path d="M5.5 6.5H15L11 11.5H1.5Z" fill="url(#ff)" stroke="#c07a28" stroke-linejoin="round"/></svg></div><div class="t" style="left:466.5px;top:151px">asec</div><div class="t d" style="left:998px;top:151px">1971-04-08</div><div class="t d" style="left:1079px;top:151px">07:47</div><div class="t d" style="left:1125px;top:151px">drwxr-xr-x</div>
<div class="abs" style="left:433px;top:176px"><svg class="ic" width="6" height="10" viewBox="0 0 6 10"><path d="M0.5 0.5L5 4.5L0.5 8.5Z" fill="#fff" stroke="#a0a0a0"/></svg></div><div class="abs" style="left:446px;top:173px"><svg class="ic" width="16" height="12" viewBox="0 0 16 12"><path d="M0.5 11V2.5L1.5 1.5H5.5L6.5 2.5V3.5H11.5V6.5" fill="url(#fb)" stroke="#c07a28"/><path d="M5.5 6.5H15L11 11.5H1.5Z" fill="url(#ff)" stroke="#c07a28" stroke-linejoin="round"/></svg></div><div class="t" style="left:466.5px;top:170px">media_rw</div><div class="t d" style="left:998px;top:170px">2017-07-18</div><div class="t d" style="left:1079px;top:170px">16:15</div><div class="t d" style="left:1125px;top:170px">drwx------</div>
<div class="abs" style="left:433px;top:195px"><svg class="ic" width="6" height="10" viewBox="0 0 6 10"><path d="M0.5 0.5L5 4.5L0.5 8.5Z" fill="#fff" stroke="#a0a0a0"/></svg></div><div class="abs" style="left:446px;top:192px"><svg class="ic" width="16" height="12" viewBox="0 0 16 12"><path d="M0.5 11V2.5L1.5 1.5H5.5L6.5 2.5V3.5H11.5V6.5" fill="url(#fb)" stroke="#c07a28"/><path d="M5.5 6.5H15L11 11.5H1.5Z" fill="url(#ff)" stroke="#c07a28" stroke-linejoin="round"/></svg></div><div class="t" style="left:466.5px;top:189px">obb</div><div class="t d" style="left:998px;top:189px">1971-04-08</div><div class="t d" style="left:1079px;top:189px">07:47</div><div class="t d" style="left:1125px;top:189px">drwxr-xr-x</div>
<div class="abs" style="left:446px;top:211px"><svg class="ic" width="16" height="12" viewBox="0 0 16 12"><path d="M0.5 11V2.5L1.5 1.5H5.5L6.5 2.5V3.5H11.5V6.5" fill="url(#fb)" stroke="#c07a28"/><path d="M5.5 6.5H15L11 11.5H1.5Z" fill="url(#ff)" stroke="#c07a28" stroke-linejoin="round"/></svg></div><div class="t" style="left:466.5px;top:208px">sdcard</div><div class="t d" style="left:998px;top:208px">1971-04-08</div><div class="t d" style="left:1079px;top:208px">07:47</div><div class="t d" style="left:1125px;top:208px">lrwxrwxrwx</div><div class="t d" style="left:1205.5px;top:208px;letter-spacing:0.2px">-&gt; /storag...</div>
<div class="abs" style="left:433px;top:233px"><svg class="ic" width="6" height="10" viewBox="0 0 6 10"><path d="M0.5 0.5L5 4.5L0.5 8.5Z" fill="#fff" stroke="#a0a0a0"/></svg></div><div class="abs" style="left:446px;top:230px"><svg class="ic" width="16" height="12" viewBox="0 0 16 12"><path d="M0.5 11V2.5L1.5 1.5H5.5L6.5 2.5V3.5H11.5V6.5" fill="url(#fb)" stroke="#c07a28"/><path d="M5.5 6.5H15L11 11.5H1.5Z" fill="url(#ff)" stroke="#c07a28" stroke-linejoin="round"/></svg></div><div class="t" style="left:466.5px;top:227px">secure</div><div class="t d" style="left:998px;top:227px">1971-04-08</div><div class="t d" style="left:1079px;top:227px">07:47</div><div class="t d" style="left:1125px;top:227px">drwx------</div>
<div class="abs" style="left:432px;top:252px"><svg class="ic" width="7" height="8" viewBox="0 0 7 8"><path d="M5.5 1V6.5H0.5Z" fill="#3c3c3c" stroke="#444" stroke-linejoin="round"/></svg></div><div class="abs" style="left:446px;top:249px"><svg class="ic" width="16" height="12" viewBox="0 0 16 12"><path d="M0.5 11V2.5L1.5 1.5H5.5L6.5 2.5V3.5H11.5V6.5" fill="url(#fb)" stroke="#c07a28"/><path d="M5.5 6.5H15L11 11.5H1.5Z" fill="url(#ff)" stroke="#c07a28" stroke-linejoin="round"/></svg></div><div class="t" style="left:466.5px;top:246px">shell</div><div class="t d" style="left:998px;top:246px">1971-04-08</div><div class="t d" style="left:1079px;top:246px">07:47</div><div class="t d" style="left:1125px;top:246px">drwx------</div>
<div class="abs" style="left:451px;top:271px"><svg class="ic" width="7" height="8" viewBox="0 0 7 8"><path d="M5.5 1V6.5H0.5Z" fill="#3c3c3c" stroke="#444" stroke-linejoin="round"/></svg></div><div class="abs" style="left:465px;top:268px"><svg class="ic" width="16" height="12" viewBox="0 0 16 12"><path d="M0.5 11V2.5L1.5 1.5H5.5L6.5 2.5V3.5H11.5V6.5" fill="url(#fb)" stroke="#c07a28"/><path d="M5.5 6.5H15L11 11.5H1.5Z" fill="url(#ff)" stroke="#c07a28" stroke-linejoin="round"/></svg></div><div class="t" style="left:485.5px;top:265px">emulated</div><div class="t d" style="left:998px;top:265px">2017-06-23</div><div class="t d" style="left:1079px;top:265px">13:24</div><div class="t d" style="left:1125px;top:265px">drwxrwx--x</div>
<div class="abs" style="left:470px;top:290px"><svg class="ic" width="7" height="8" viewBox="0 0 7 8"><path d="M5.5 1V6.5H0.5Z" fill="#3c3c3c" stroke="#444" stroke-linejoin="round"/></svg></div><div class="abs" style="left:484px;top:287px"><svg class="ic" width="16" height="12" viewBox="0 0 16 12"><path d="M0.5 11V2.5L1.5 1.5H5.5L6.5 2.5V3.5H11.5V6.5" fill="url(#fb)" stroke="#c07a28"/><path d="M5.5 6.5H15L11 11.5H1.5Z" fill="url(#ff)" stroke="#c07a28" stroke-linejoin="round"/></svg></div><div class="t" style="left:504.5px;top:284px">0</div><div class="t d" style="left:998px;top:284px">2017-07-19</div><div class="t d" style="left:1079px;top:284px">08:44</div><div class="t d" style="left:1125px;top:284px">drwxrwx--x</div>
<div class="abs" style="left:490px;top:309px"><svg class="ic" width="6" height="10" viewBox="0 0 6 10"><path d="M0.5 0.5L5 4.5L0.5 8.5Z" fill="#fff" stroke="#a0a0a0"/></svg></div><div class="abs" style="left:503px;top:306px"><svg class="ic" width="16" height="12" viewBox="0 0 16 12"><path d="M0.5 11V2.5L1.5 1.5H5.5L6.5 2.5V3.5H11.5V6.5" fill="url(#fb)" stroke="#c07a28"/><path d="M5.5 6.5H15L11 11.5H1.5Z" fill="url(#ff)" stroke="#c07a28" stroke-linejoin="round"/></svg></div><div class="t" style="left:523.5px;top:303px">ASUS</div><div class="t d" style="left:998px;top:303px">2017-06-09</div><div class="t d" style="left:1079px;top:303px">11:54</div><div class="t d" style="left:1125px;top:303px">drwxrwx---</div>
<div class="sel" style="top:322px"></div><div class="abs" style="left:490px;top:328px"><svg class="ic" width="6" height="10" viewBox="0 0 6 10"><path d="M0.5 0.5L5 4.5L0.5 8.5Z" fill="#fff" stroke="#a0a0a0"/></svg></div><div class="abs" style="left:503px;top:325px"><svg class="ic" width="16" height="12" viewBox="0 0 16 12"><path d="M0.5 11V2.5L1.5 1.5H5.5L6.5 2.5V3.5H11.5V6.5" fill="url(#fb)" stroke="#c07a28"/><path d="M5.5 6.5H15L11 11.5H1.5Z" fill="url(#ff)" stroke="#c07a28" stroke-linejoin="round"/></svg></div><div class="t" style="left:523.5px;top:322px">Alarms</div><div class="t d" style="left:998px;top:322px">1970-01-02</div><div class="t d" style="left:1079px;top:322px">08:22</div><div class="t d" style="left:1125px;top:322px">drwxrwx---</div>
<div class="abs" style="left:490px;top:347px"><svg class="ic" width="6" height="10" viewBox="0 0 6 10"><path d="M0.5 0.5L5 4.5L0.5 8.5Z" fill="#fff" stroke="#a0a0a0"/></svg></div><div class="abs" style="left:503px;top:344px"><svg class="ic" width="16" height="12" viewBox="0 0 16 12"><path d="M0.5 11V2.5L1.5 1.5H5.5L6.5 2.5V3.5H11.5V6.5" fill="url(#fb)" stroke="#c07a28"/><path d="M5.5 6.5H15L11 11.5H1.5Z" fill="url(#ff)" stroke="#c07a28" stroke-linejoin="round"/></svg></div><div class="t" style="left:523.5px;top:341px">Android</div><div class="t d" style="left:998px;top:341px">2016-12-12</div><div class="t d" style="left:1079px;top:341px">15:40</div><div class="t d" style="left:1125px;top:341px">drwxrwx--x</div>
<div class="abs" style="left:490px;top:366px"><svg class="ic" width="6" height="10" viewBox="0 0 6 10"><path d="M0.5 0.5L5 4.5L0.5 8.5Z" fill="#fff" stroke="#a0a0a0"/></svg></div><div class="abs" style="left:503px;top:363px"><svg class="ic" width="16" height="12" viewBox="0 0 16 12"><path d="M0.5 11V2.5L1.5 1.5H5.5L6.5 2.5V3.5H11.5V6.5" fill="url(#fb)" stroke="#c07a28"/><path d="M5.5 6.5H15L11 11.5H1.5Z" fill="url(#ff)" stroke="#c07a28" stroke-linejoin="round"/></svg></div><div class="t" style="left:523.5px;top:360px">Browser_Savedfiles</div><div class="t d" style="left:998px;top:360px">1970-03-18</div><div class="t d" style="left:1079px;top:360px">14:02</div><div class="t d" style="left:1125px;top:360px">drwxrwx---</div>
<div class="abs" style="left:490px;top:385px"><svg class="ic" width="6" height="10" viewBox="0 0 6 10"><path d="M0.5 0.5L5 4.5L0.5 8.5Z" fill="#fff" stroke="#a0a0a0"/></svg></div><div class="abs" style="left:503px;top:382px"><svg class="ic" width="16" height="12" viewBox="0 0 16 12"><path d="M0.5 11V2.5L1.5 1.5H5.5L6.5 2.5V3.5H11.5V6.5" fill="url(#fb)" stroke="#c07a28"/><path d="M5.5 6.5H15L11 11.5H1.5Z" fill="url(#ff)" stroke="#c07a28" stroke-linejoin="round"/></svg></div><div class="t" style="left:523.5px;top:379px">DCIM</div><div class="t d" style="left:998px;top:379px">2017-01-19</div><div class="t d" style="left:1079px;top:379px">01:08</div><div class="t d" style="left:1125px;top:379px">drwxrwx---</div>
<div class="abs" style="left:489px;top:405px"><svg class="ic" width="6" height="10" viewBox="0 0 6 10"><path d="M0.5 0.5L5 4.5L0.5 8.5Z" fill="#fff" stroke="#a0a0a0"/></svg></div><div class="abs" style="left:502px;top:402px"><svg class="ic" width="16" height="12" viewBox="0 0 16 12"><path d="M0.5 11V2.5L1.5 1.5H5.5L6.5 2.5V3.5H11.5V6.5" fill="url(#fb)" stroke="#c07a28"/><path d="M5.5 6.5H15L11 11.5H1.5Z" fill="url(#ff)" stroke="#c07a28" stroke-linejoin="round"/></svg></div><div class="t" style="left:522.5px;top:399px">onemobile_download</div><div class="t d" style="left:998px;top:399px">2017-06-01</div><div class="t d" style="left:1079px;top:399px">19:23</div><div class="t d" style="left:1125px;top:399px">drwxrwx---</div>
<div class="abs" style="left:488px;top:424px"><svg class="ic" width="7" height="8" viewBox="0 0 7 8"><path d="M5.5 1V6.5H0.5Z" fill="#3c3c3c" stroke="#444" stroke-linejoin="round"/></svg></div><div class="abs" style="left:502px;top:421px"><svg class="ic" width="16" height="12" viewBox="0 0 16 12"><path d="M0.5 11V2.5L1.5 1.5H5.5L6.5 2.5V3.5H11.5V6.5" fill="url(#fb)" stroke="#c07a28"/><path d="M5.5 6.5H15L11 11.5H1.5Z" fill="url(#ff)" stroke="#c07a28" stroke-linejoin="round"/></svg></div><div class="t" style="left:522.5px;top:418px">qpython</div><div class="t d" style="left:998px;top:418px">2017-07-18</div><div class="t d" style="left:1079px;top:418px">17:17</div><div class="t d" style="left:1125px;top:418px">drwxrwx---</div>
<div class="abs" style="left:508px;top:443px"><svg class="ic" width="6" height="10" viewBox="0 0 6 10"><path d="M0.5 0.5L5 4.5L0.5 8.5Z" fill="#fff" stroke="#a0a0a0"/></svg></div><div class="abs" style="left:521px;top:440px"><svg class="ic" width="16" height="12" viewBox="0 0 16 12"><path d="M0.5 11V2.5L1.5 1.5H5.5L6.5 2.5V3.5H11.5V6.5" fill="url(#fb)" stroke="#c07a28"/><path d="M5.5 6.5H15L11 11.5H1.5Z" fill="url(#ff)" stroke="#c07a28" stroke-linejoin="round"/></svg></div><div class="t" style="left:541.5px;top:437px">cache</div><div class="t d" style="left:998px;top:437px">2017-07-18</div><div class="t d" style="left:1079px;top:437px">16:55</div><div class="t d" style="left:1125px;top:437px">drwxrwx---</div>
<div class="abs" style="left:508px;top:462px"><svg class="ic" width="6" height="10" viewBox="0 0 6 10"><path d="M0.5 0.5L5 4.5L0.5 8.5Z" fill="#fff" stroke="#a0a0a0"/></svg></div><div class="abs" style="left:521px;top:459px"><svg class="ic" width="16" height="12" viewBox="0 0 16 12"><path d="M0.5 11V2.5L1.5 1.5H5.5L6.5 2.5V3.5H11.5V6.5" fill="url(#fb)" stroke="#c07a28"/><path d="M5.5 6.5H15L11 11.5H1.5Z" fill="url(#ff)" stroke="#c07a28" stroke-linejoin="round"/></svg></div><div class="t" style="left:541.5px;top:456px">lib</div><div class="t d" style="left:998px;top:456px">2017-07-18</div><div class="t d" style="left:1079px;top:456px">16:54</div><div class="t d" style="left:1125px;top:456px">drwxrwx---</div>
<div class="abs" style="left:508px;top:481px"><svg class="ic" width="6" height="10" viewBox="0 0 6 10"><path d="M0.5 0.5L5 4.5L0.5 8.5Z" fill="#fff" stroke="#a0a0a0"/></svg></div><div class="abs" style="left:521px;top:478px"><svg class="ic" width="16" height="12" viewBox="0 0 16 12"><path d="M0.5 11V2.5L1.5 1.5H5.5L6.5 2.5V3.5H11.5V6.5" fill="url(#fb)" stroke="#c07a28"/><path d="M5.5 6.5H15L11 11.5H1.5Z" fill="url(#ff)" stroke="#c07a28" stroke-linejoin="round"/></svg></div><div class="t" style="left:541.5px;top:475px">projects</div><div class="t d" style="left:998px;top:475px">2017-07-18</div><div class="t d" style="left:1079px;top:475px">16:54</div><div class="t d" style="left:1125px;top:475px">drwxrwx---</div>
<div class="abs" style="left:508px;top:500px"><svg class="ic" width="6" height="10" viewBox="0 0 6 10"><path d="M0.5 0.5L5 4.5L0.5 8.5Z" fill="#fff" stroke="#a0a0a0"/></svg></div><div class="abs" style="left:521px;top:497px"><svg class="ic" width="16" height="12" viewBox="0 0 16 12"><path d="M0.5 11V2.5L1.5 1.5H5.5L6.5 2.5V3.5H11.5V6.5" fill="url(#fb)" stroke="#c07a28"/><path d="M5.5 6.5H15L11 11.5H1.5Z" fill="url(#ff)" stroke="#c07a28" stroke-linejoin="round"/></svg></div><div class="t" style="left:541.5px;top:494px">projects3</div><div class="t d" style="left:998px;top:494px">2017-07-18</div><div class="t d" style="left:1079px;top:494px">16:18</div><div class="t d" style="left:1125px;top:494px">drwxrwx---</div>
<div class="abs" style="left:507px;top:519px"><svg class="ic" width="7" height="8" viewBox="0 0 7 8"><path d="M5.5 1V6.5H0.5Z" fill="#3c3c3c" stroke="#444" stroke-linejoin="round"/></svg></div><div class="abs" style="left:521px;top:516px"><svg class="ic" width="16" height="12" viewBox="0 0 16 12"><path d="M0.5 11V2.5L1.5 1.5H5.5L6.5 2.5V3.5H11.5V6.5" fill="url(#fb)" stroke="#c07a28"/><path d="M5.5 6.5H15L11 11.5H1.5Z" fill="url(#ff)" stroke="#c07a28" stroke-linejoin="round"/></svg></div><div class="t" style="left:541.5px;top:513px">scripts</div><div class="t d" style="left:998px;top:513px">2017-07-18</div><div class="t d" style="left:1079px;top:513px">20:00</div><div class="t d" style="left:1125px;top:513px">drwxrwx---</div>
<div class="abs" style="left:542px;top:534px"><svg class="ic" width="12" height="15" viewBox="0 0 12 15"><path d="M0.5 0.5H7.5L10.5 3.5V13.5H0.5Z" fill="#f3f7fd" stroke="url(#fs)"/><path d="M7.5 1V4H10.5Z" fill="#e2b65a"/><path d="M2 3.5h3.7M2 5.5h7M2 7.5h7M2 9.5h7M2 11.5h5" stroke="#7b91c4"/></svg></div><div class="t" style="left:560.5px;top:532px">a8player.py</div><div class="t r d" style="right:357px;top:532px">1619</div><div class="t d" style="left:998px;top:532px">2017-07-18</div><div class="t d" style="left:1079px;top:532px">16:54</div><div class="t d" style="left:1125px;top:532px">-rw-rw----</div>
<div class="abs" style="left:542px;top:553px"><svg class="ic" width="12" height="15" viewBox="0 0 12 15"><path d="M0.5 0.5H7.5L10.5 3.5V13.5H0.5Z" fill="#f3f7fd" stroke="url(#fs)"/><path d="M7.5 1V4H10.5Z" fill="#e2b65a"/><path d="M2 3.5h3.7M2 5.5h7M2 7.5h7M2 9.5h7M2 11.5h5" stroke="#7b91c4"/></svg></div><div class="t" style="left:560.5px;top:551px">helloworld.py</div><div class="t r d" style="right:357px;top:551px">323</div><div class="t d" style="left:998px;top:551px">2017-07-18</div><div class="t d" style="left:1079px;top:551px">16:54</div><div class="t d" style="left:1125px;top:551px">-rw-rw----</div>
<div class="abs" style="left:542px;top:572px"><svg class="ic" width="12" height="15" viewBox="0 0 12 15"><path d="M0.5 0.5H7.5L10.5 3.5V13.5H0.5Z" fill="#f3f7fd" stroke="url(#fs)"/><path d="M7.5 1V4H10.5Z" fill="#e2b65a"/><path d="M2 3.5h3.7M2 5.5h7M2 7.5h7M2 9.5h7M2 11.5h5" stroke="#7b91c4"/></svg></div><div class="t" style="left:560.5px;top:570px">pip_console.py</div><div class="t r d" style="right:357px;top:570px">357</div><div class="t d" style="left:998px;top:570px">2017-07-18</div><div class="t d" style="left:1079px;top:570px">16:54</div><div class="t d" style="left:1125px;top:570px">-rw-rw----</div>
<div class="abs" style="left:542px;top:591px"><svg class="ic" width="12" height="15" viewBox="0 0 12 15"><path d="M0.5 0.5H7.5L10.5 3.5V13.5H0.5Z" fill="#f3f7fd" stroke="url(#fs)"/><path d="M7.5 1V4H10.5Z" fill="#e2b65a"/><path d="M2 3.5h3.7M2 5.5h7M2 7.5h7M2 9.5h7M2 11.5h5" stroke="#7b91c4"/></svg></div><div class="t" style="left:560.5px;top:589px">python-ngrok.py</div><div class="t r d" style="right:357px;top:589px">12528</div><div class="t d" style="left:998px;top:589px">2017-07-18</div><div class="t d" style="left:1079px;top:589px">19:58</div><div class="t d" style="left:1125px;top:589px">-rw-rw----</div>
<div class="hov" style="top:608px"></div><div class="abs" style="left:542px;top:610px"><svg class="ic" width="12" height="15" viewBox="0 0 12 15"><path d="M0.5 0.5H7.5L10.5 3.5V13.5H0.5Z" fill="#f3f7fd" stroke="url(#fs)"/><path d="M7.5 1V4H10.5Z" fill="#e2b65a"/><path d="M2 3.5h3.7M2 5.5h7M2 7.5h7M2 9.5h7M2 11.5h5" stroke="#7b91c4"/></svg></div><div class="t" style="left:560.5px;top:608px">qedit4web.py</div><div class="t r d" style="right:357px;top:608px">121959</div><div class="t d" style="left:998px;top:608px">2017-07-18</div><div class="t d" style="left:1079px;top:608px">16:54</div><div class="t d" style="left:1125px;top:608px">-rw-rw----</div>
<div class="abs" style="left:542px;top:629px"><svg class="ic" width="12" height="15" viewBox="0 0 12 15"><path d="M0.5 0.5H7.5L10.5 3.5V13.5H0.5Z" fill="#f3f7fd" stroke="url(#fs)"/><path d="M7.5 1V4H10.5Z" fill="#e2b65a"/><path d="M2 3.5h3.7M2 5.5h7M2 7.5h7M2 9.5h7M2 11.5h5" stroke="#7b91c4"/></svg></div><div class="t" style="left:560.5px;top:627px">webpy.py</div><div class="t r d" style="right:357px;top:627px">397</div><div class="t d" style="left:998px;top:627px">2017-07-18</div><div class="t d" style="left:1079px;top:627px">20:00</div><div class="t d" style="left:1125px;top:627px">-rw-rw----</div>
<div class="abs" style="left:508px;top:652px"><svg class="ic" width="6" height="10" viewBox="0 0 6 10"><path d="M0.5 0.5L5 4.5L0.5 8.5Z" fill="#fff" stroke="#a0a0a0"/></svg></div><div class="abs" style="left:521px;top:649px"><svg class="ic" width="16" height="12" viewBox="0 0 16 12"><path d="M0.5 11V2.5L1.5 1.5H5.5L6.5 2.5V3.5H11.5V6.5" fill="url(#fb)" stroke="#c07a28"/><path d="M5.5 6.5H15L11 11.5H1.5Z" fill="url(#ff)" stroke="#c07a28" stroke-linejoin="round"/></svg></div><div class="t" style="left:541.5px;top:646px">scripts3</div><div class="t d" style="left:998px;top:646px">2017-07-18</div><div class="t d" style="left:1079px;top:646px">16:51</div><div class="t d" style="left:1125px;top:646px">drwxrwx---</div>
<div class="abs" style="left:508px;top:671px"><svg class="ic" width="6" height="10" viewBox="0 0 6 10"><path d="M0.5 0.5L5 4.5L0.5 8.5Z" fill="#fff" stroke="#a0a0a0"/></svg></div><div class="abs" style="left:521px;top:668px"><svg class="ic" width="16" height="12" viewBox="0 0 16 12"><path d="M0.5 11V2.5L1.5 1.5H5.5L6.5 2.5V3.5H11.5V6.5" fill="url(#fb)" stroke="#c07a28"/><path d="M5.5 6.5H15L11 11.5H1.5Z" fill="url(#ff)" stroke="#c07a28" stroke-linejoin="round"/></svg></div><div class="t" style="left:541.5px;top:665px">snippets</div><div class="t d" style="left:998px;top:665px">2017-07-18</div><div class="t d" style="left:1079px;top:665px">17:17</div><div class="t d" style="left:1125px;top:665px">drwxrwx---</div>
<div class="abs" style="left:508px;top:690px"><svg class="ic" width="6" height="10" viewBox="0 0 6 10"><path d="M0.5 0.5L5 4.5L0.5 8.5Z" fill="#fff" stroke="#a0a0a0"/></svg></div><div class="abs" style="left:521px;top:687px"><svg class="ic" width="16" height="12" viewBox="0 0 16 12"><path d="M0.5 11V2.5L1.5 1.5H5.5L6.5 2.5V3.5H11.5V6.5" fill="url(#fb)" stroke="#c07a28"/><path d="M5.5 6.5H15L11 11.5H1.5Z" fill="url(#ff)" stroke="#c07a28" stroke-linejoin="round"/></svg></div><div class="t" style="left:541.5px;top:684px">snippets3</div><div class="t d" style="left:998px;top:684px">2017-07-18</div><div class="t d" style="left:1079px;top:684px">16:37</div><div class="t d" style="left:1125px;top:684px">drwxrwx---</div>
<div class="abs" style="left:489px;top:709px"><svg class="ic" width="6" height="10" viewBox="0 0 6 10"><path d="M0.5 0.5L5 4.5L0.5 8.5Z" fill="#fff" stroke="#a0a0a0"/></svg></div><div class="abs" style="left:502px;top:706px"><svg class="ic" width="16" height="12" viewBox="0 0 16 12"><path d="M0.5 11V2.5L1.5 1.5H5.5L6.5 2.5V3.5H11.5V6.5" fill="url(#fb)" stroke="#c07a28"/><path d="M5.5 6.5H15L11 11.5H1.5Z" fill="url(#ff)" stroke="#c07a28" stroke-linejoin="round"/></svg></div><div class="t" style="left:522.5px;top:703px">romtoolbox</div><div class="t d" style="left:998px;top:703px">2017-06-01</div><div class="t d" style="left:1079px;top:703px">19:25</div><div class="t d" style="left:1125px;top:703px">drwxrwx---</div>
<div class="abs" style="left:489px;top:728px"><svg class="ic" width="6" height="10" viewBox="0 0 6 10"><path d="M0.5 0.5L5 4.5L0.5 8.5Z" fill="#fff" stroke="#a0a0a0"/></svg></div><div class="abs" style="left:502px;top:725px"><svg class="ic" width="16" height="12" viewBox="0 0 16 12"><path d="M0.5 11V2.5L1.5 1.5H5.5L6.5 2.5V3.5H11.5V6.5" fill="url(#fb)" stroke="#c07a28"/><path d="M5.5 6.5H15L11 11.5H1.5Z" fill="url(#ff)" stroke="#c07a28" stroke-linejoin="round"/></svg></div><div class="t" style="left:522.5px;top:722px">storage</div><div class="t d" style="left:998px;top:722px">1970-01-02</div><div class="t d" style="left:1079px;top:722px">08:23</div><div class="t d" style="left:1125px;top:722px">drwxrwx---</div>
<div class="abs" style="left:504px;top:743px"><svg class="ic" width="12" height="15" viewBox="0 0 12 15"><path d="M0.5 0.5H7.5L10.5 3.5V13.5H0.5Z" fill="#f3f7fd" stroke="url(#fs)"/><path d="M7.5 1V4H10.5Z" fill="#e2b65a"/><path d="M2 3.5h3.7M2 5.5h7M2 7.5h7M2 9.5h7M2 11.5h5" stroke="#7b91c4"/></svg></div><div class="t" style="left:522.5px;top:741px">verify.txt</div><div class="t r d" style="right:357px;top:741px">727</div><div class="t d" style="left:998px;top:741px">1970-01-02</div><div class="t d" style="left:1079px;top:741px">08:25</div><div class="t d" style="left:1125px;top:741px">-rw-rw----</div>
<div class="abs" style="left:470px;top:766px"><svg class="ic" width="6" height="10" viewBox="0 0 6 10"><path d="M0.5 0.5L5 4.5L0.5 8.5Z" fill="#fff" stroke="#a0a0a0"/></svg></div><div class="abs" style="left:483px;top:763px"><svg class="ic" width="16" height="12" viewBox="0 0 16 12"><path d="M0.5 11V2.5L1.5 1.5H5.5L6.5 2.5V3.5H11.5V6.5" fill="url(#fb)" stroke="#c07a28"/><path d="M5.5 6.5H15L11 11.5H1.5Z" fill="url(#ff)" stroke="#c07a28" stroke-linejoin="round"/></svg></div><div class="t" style="left:503.5px;top:760px">legacy</div><div class="t d" style="left:998px;top:760px">1970-01-02</div><div class="t d" style="left:1079px;top:760px">08:23</div><div class="t d" style="left:1125px;top:760px">drwxrwx--x</div>
</body></html>
